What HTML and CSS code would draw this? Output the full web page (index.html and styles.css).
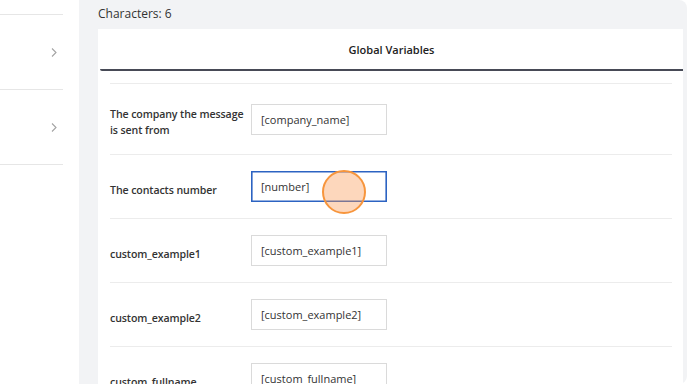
FILE: index.html
```html
<!DOCTYPE html>
<html lang="en">
<head>
  <meta charset="UTF-8" />
  <title>Global Variables</title>
  <link rel="stylesheet" href="styles.css">
</head>
<body>
  <div class="page">
    <aside class="sidebar">
      <ul class="side-list">
        <li class="side-item side-item-cut"></li>
        <li class="side-item">
          <svg class="chevron" width="6" height="9" viewBox="0 0 6 9"><path d="M1 0.5 L5 4.5 L1 8.5" fill="none" stroke="#a3a3a3" stroke-width="1.1"/></svg>
        </li>
        <li class="side-item">
          <svg class="chevron" width="6" height="9" viewBox="0 0 6 9"><path d="M1 0.5 L5 4.5 L1 8.5" fill="none" stroke="#a3a3a3" stroke-width="1.1"/></svg>
        </li>
      </ul>
    </aside>

    <main class="panel">
      <div class="char-count">Characters: 6</div>

      <section class="card">
        <header class="card-tab">Global Variables</header>
        <div class="var-table">
          <div class="var-row">
            <label class="var-label">The company the message is sent from</label>
            <input class="var-input" type="text" value="[company_name]" />
          </div>
          <div class="var-row">
            <label class="var-label">The contacts number</label>
            <input class="var-input focused" type="text" value="[number]" />
          </div>
          <div class="var-row">
            <label class="var-label">custom_example1</label>
            <input class="var-input" type="text" value="[custom_example1]" />
          </div>
          <div class="var-row">
            <label class="var-label">custom_example2</label>
            <input class="var-input" type="text" value="[custom_example2]" />
          </div>
          <div class="var-row">
            <label class="var-label">custom_fullname</label>
            <input class="var-input" type="text" value="[custom_fullname]" />
          </div>
        </div>
      </section>
    </main>
  </div>

  <div class="click-mark"></div>
</body>
</html>
```

FILE: styles.css
```css
body {
  margin: 0;
  font-family: "Open Sans", "Noto Sans", sans-serif;
  color: #333;
  background: #fff;
  overflow: hidden;
}
.page { display: flex; height: 384px; }

/* left nav */
.sidebar { width: 79px; flex-shrink: 0; background: #fff; }
.side-list { list-style: none; margin: 0; padding: 0; width: 63px; }
.side-item {
  height: 74px;
  border-bottom: 1px solid #e6e6e6;
  display: flex; align-items: center; justify-content: flex-end;
  padding-right: 6px;
}
.side-item-cut { height: 14px; }
.chevron { display: block; }

/* main area */
.panel {
  flex: 1;
  margin-right: 1px;
  background: #f2f3f5;
  border-radius: 0 8px 8px 0;
  padding: 0 4px 0 19px;
}
.char-count {
  height: 29px;
  line-height: 28px;
  font-size: 12px;
  color: #333;
}

.card { background: #fff; height: 400px; }
.card-tab {
  height: 40px;
  line-height: 41px;
  text-align: center;
  font-size: 11px;
  font-weight: 600;
  color: #222;
  border-bottom: 2px solid #474a56;
  border-bottom-left-radius: 2px;
  margin-left: 2px;
}

.var-table {
  margin: 12px 11px 0 12px;
  border-top: 1px solid #ececec;
}
.var-row {
  display: grid;
  grid-template-columns: 141px 136px;
  align-items: center;
  padding: 16px 0;
  border-bottom: 1px solid #ececec;
}
.var-label {
  font-size: 10.6px;
  font-weight: 600;
  line-height: 16px;
  letter-spacing: -0.1px;
  color: #333;
  padding-top: 6px;
  padding-right: 2px;
}
.var-input {
  box-sizing: border-box;
  width: 136px;
  height: 31px;
  margin: 0;
  padding: 0 9px;
  border: 1px solid #dadada;
  border-radius: 0;
  font-family: inherit;
  font-size: 11px;
  color: #333;
  background: #fff;
  outline: none;
}
.var-input.focused {
  border-color: #2c63c2;
  box-shadow: inset 0 0 0 0.6px #2c63c2;
}

/* click highlight over the field */
.click-mark {
  position: absolute;
  left: 322px;
  top: 170px;
  width: 40px;
  height: 40px;
  border: 2px solid #f7953c;
  border-radius: 50%;
  background: rgba(250, 150, 80, 0.38);
}
```
